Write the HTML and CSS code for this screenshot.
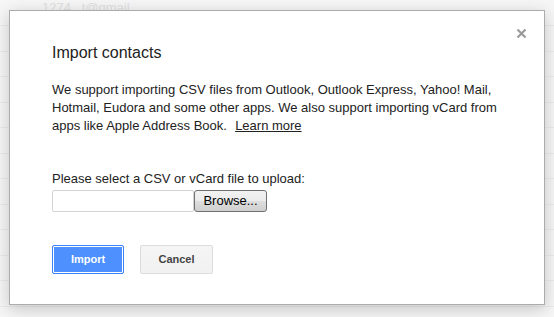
FILE: index.html
```html
<!DOCTYPE html>
<html>
<head>
<meta charset="utf-8">
<link rel="stylesheet" href="styles.css">
</head>
<body>
<div class="page">
  <div class="row"><span class="ghost">1274   t@gmail</span></div>
  <div class="row"></div>
  <div class="row"></div>
  <div class="row"></div>
  <div class="row"></div>
  <div class="row"></div>
  <div class="row"></div>
  <div class="row"></div>
  <div class="row"></div>
  <div class="row"></div>
  <div class="row"></div>
  <div class="row"></div>
  <div class="row"></div>
</div>
<div class="dialog">
  <svg class="close" width="11" height="11" viewBox="0 0 11 11"><path d="M1.5 1.5 L9.5 9.5 M9.5 1.5 L1.5 9.5" stroke="#9a9a9a" stroke-width="2.2" fill="none"/></svg>
  <h1 class="title">Import contacts</h1>
  <p class="desc">We support importing CSV files from Outlook, Outlook Express, Yahoo! Mail, Hotmail, Eudora and some other apps. We also support importing vCard from apps like Apple Address Book.&nbsp; <a class="link" href="#">Learn more</a></p>
  <div class="label">Please select a CSV or vCard file to upload:</div>
  <div class="file">
    <div class="file-text"></div>
    <div class="browse">Browse...</div>
  </div>
  <div class="actions">
    <div class="btn btn-primary">Import</div>
    <div class="btn btn-cancel">Cancel</div>
  </div>
</div>
</body>
</html>
```
FILE: styles.css
```css
html, body {
  margin: 0;
  padding: 0;
  background: #f6f6f6;
  overflow: hidden;
}
body {
  width: 554px;
  height: 317px;
  position: relative;
  font-family: "Liberation Sans", Arial, sans-serif;
}
.page {
  display: flex;
  flex-direction: column;
}
.row {
  height: 24px;
  border-bottom: 1px solid #ebebeb;
  flex: none;
  padding-left: 42px;
  font-size: 13px;
  line-height: 16px;
}
.row:nth-child(even) {
  height: 25px;
}
.row:first-child {
  height: 25px;
}
.ghost {
  color: #e0e0e0;
  white-space: pre;
}
.dialog {
  position: absolute;
  left: 9px;
  top: 10px;
  width: 536px;
  box-sizing: border-box;
  background: #fff;
  border: 1px solid #acacac;
  box-shadow: 0 4px 16px rgba(0, 0, 0, 0.2);
  padding: 32px 42px 30px 42px;
  color: #222;
}
.close {
  position: absolute;
  left: 506px;
  top: 17px;
  display: block;
}
.title {
  margin: 0;
  font-size: 16px;
  line-height: 20px;
  font-weight: normal;
  color: #222;
}
.desc {
  margin: 18px 0 0 0;
  font-size: 13px;
  line-height: 18px;
}
.link {
  color: #222;
  text-decoration: underline;
  margin-left: 1px;
}
.label {
  margin-top: 35px;
  font-size: 13px;
  line-height: 18px;
}
.file {
  margin-top: 2px;
  display: flex;
  height: 22px;
}
.file-text {
  width: 142px;
  height: 22px;
  box-sizing: border-box;
  border: 1px solid #d4d4d4;
  border-radius: 2px;
  background: #fff;
}
.browse {
  width: 73px;
  height: 22px;
  box-sizing: border-box;
  border: 1px solid #707070;
  border-radius: 3px;
  background: linear-gradient(#f2f2f2 0%, #ebebeb 50%, #dddddd 51%, #cfcfcf 100%);
  font-size: 13px;
  line-height: 20px;
  text-align: center;
  color: #000;
}
.actions {
  margin-top: 33px;
  display: flex;
  gap: 16px;
}
.btn {
  height: 29px;
  box-sizing: border-box;
  border-radius: 2px;
  font-size: 11px;
  font-weight: bold;
  line-height: 27px;
  text-align: center;
}
.btn-primary {
  width: 72px;
  background: #4d90fe;
  border: 1px solid #3c84f5;
  box-shadow: inset 0 0 0 1px #fff;
  color: #fff;
}
.btn-cancel {
  width: 73px;
  background: linear-gradient(#f5f5f5, #f1f1f1);
  border: 1px solid #dcdcdc;
  color: #444;
}
```
